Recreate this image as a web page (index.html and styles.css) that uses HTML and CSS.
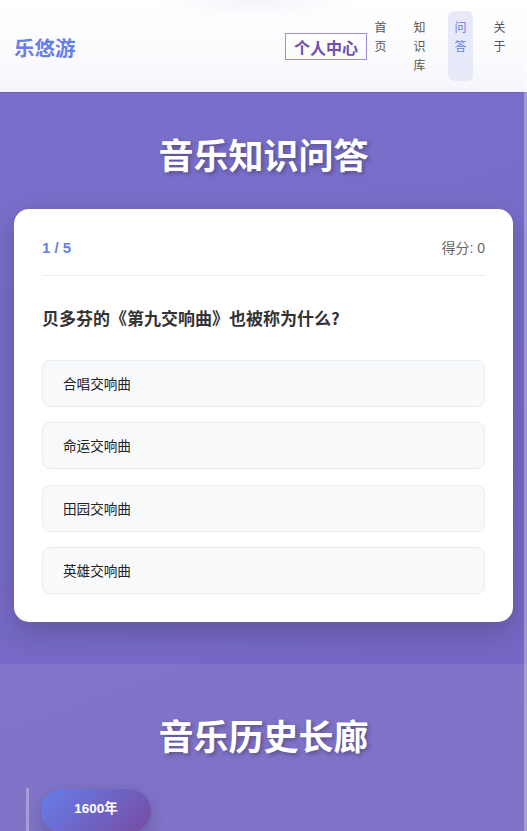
FILE: index.html
```html
<!DOCTYPE html>
<html lang="zh-CN">
<head>
<meta charset="utf-8">
<title>乐悠游 - 音乐知识问答</title>
<link rel="stylesheet" href="styles.css">
</head>
<body>
<header class="site-header">
  <div class="logo">乐悠游</div>
  <div class="header-right">
    <a class="profile-btn" href="#">个人中心</a>
    <ul class="nav">
      <li class="nav-item">首页</li>
      <li class="nav-item">知识库</li>
      <li class="nav-item active">问答</li>
      <li class="nav-item">关于</li>
    </ul>
  </div>
</header>

<main>
  <section class="quiz-section">
    <h2 class="section-title">音乐知识问答</h2>
    <div class="quiz-card">
      <div class="quiz-head">
        <span class="progress">1 / 5</span>
        <span class="score">得分: 0</span>
      </div>
      <h3 class="question">贝多芬的《第九交响曲》也被称为什么?</h3>
      <div class="options">
        <div class="option">合唱交响曲</div>
        <div class="option">命运交响曲</div>
        <div class="option">田园交响曲</div>
        <div class="option">英雄交响曲</div>
      </div>
    </div>
  </section>

  <section class="history-section">
    <h2 class="section-title">音乐历史长廊</h2>
    <div class="timeline">
      <div class="timeline-item">
        <span class="year">1600年</span>
      </div>
    </div>
  </section>
</main>
<div class="edge-strip"></div>
</body>
</html>
```

FILE: styles.css
```css
* { box-sizing: border-box; }

html, body {
  margin: 0;
  padding: 0;
}

body {
  font-family: "Liberation Sans", "Noto Sans CJK SC", sans-serif;
  background: linear-gradient(160deg, #7a70cc 0%, #7466c2 100%);
  color: #333;
  min-height: 831px;
}

.site-header {
  height: 93px;
  display: flex;
  align-items: center;
  justify-content: space-between;
  padding: 0 15px 0 14px;
  background:
    radial-gradient(ellipse 100px 20px at 255px 0px, rgba(238, 236, 248, 0.6), rgba(255, 255, 255, 0) 100%),
    linear-gradient(180deg, #ffffff 0%, #fbfbfe 60%, #f6f5fc 100%);
  border-bottom: 1px solid #6f63bd;
}

.logo {
  font-size: 20.5px;
  font-weight: 700;
  color: #667eea;
  font-family: "Noto Sans CJK SC", sans-serif;
  margin-top: 1px;
}

.header-right {
  display: flex;
  align-items: center;
  height: 70px;
}

.profile-btn {
  display: block;
  font-family: "Noto Sans CJK SC", sans-serif;
  font-size: 16px;
  font-weight: 700;
  line-height: 22px;
  color: #6c4fae;
  text-decoration: none;
  border: 1.5px solid #a08bd6;
  padding: 2px 8px 1px;
  margin-right: 1px;
}

.nav {
  list-style: none;
  margin: 0;
  padding: 0;
  display: flex;
  align-items: stretch;
  height: 70px;
  gap: 14px;
}

.nav-item {
  font-family: "Noto Sans CJK SC", sans-serif;
  font-size: 12px;
  line-height: 19px;
  color: #555;
  padding: 6px 6.5px;
  width: 25px;
  border-radius: 6px;
  word-break: break-all;
}

.nav-item.active {
  background: #e9eaf9;
  color: #667eea;
  margin-left: 2px;
}

.section-title {
  margin: 0;
  text-align: center;
  color: #fff;
  font-family: "Noto Sans CJK SC", sans-serif;
  font-size: 35px;
  font-weight: 700;
  line-height: 42px;
  text-shadow: 2px 2px 4px rgba(0, 0, 0, 0.3);
}

.quiz-section {
  padding: 40px 14px 42px;
}

.quiz-section .section-title {
  margin-bottom: 34px;
}

.quiz-card {
  background: #fff;
  border-radius: 15px;
  padding: 28px 28px 28px;
  box-shadow: 0 10px 30px rgba(0, 0, 0, 0.2);
}

.quiz-head {
  display: flex;
  justify-content: space-between;
  align-items: center;
  line-height: 22px;
  padding-bottom: 16px;
  border-bottom: 1px solid #eeeeee;
}

.progress {
  font-size: 15px;
  font-weight: 700;
  color: #667eea;
}

.score {
  font-size: 14px;
  color: #666;
}

.question {
  margin: 29px 0 29px;
  font-family: "Noto Sans CJK SC", sans-serif;
  font-size: 17px;
  line-height: 26px;
  font-weight: 700;
  color: #333;
}

.options {
  display: flex;
  flex-direction: column;
  gap: 15.3px;
}

.option {
  background: #f8f9fa;
  border: 1px solid #e9ecef;
  border-radius: 8px;
  padding: 14px 20px 14px;
  font-family: "Noto Sans CJK SC", sans-serif;
  font-size: 13.6px;
  line-height: 17px;
  color: #222;
}

.history-section {
  background: rgba(255, 255, 255, 0.08);
  padding: 50px 14px 0 26px;
  min-height: 200px;
}

.history-section .section-title {
  margin-bottom: 32px;
  margin-left: -12px;
}

.timeline {
  border-left: 3px solid rgba(255, 255, 255, 0.3);
  padding-left: 12px;
  padding-top: 1px;
}

.year {
  display: inline-block;
  width: 110px;
  height: 44px;
  line-height: 40px;
  text-align: center;
  border-radius: 22px;
  background: linear-gradient(135deg, #667eea 0%, #764ba2 100%);
  color: #fff;
  font-weight: 700;
  font-size: 13.5px;
  font-family: "Liberation Sans", "Noto Sans CJK SC", sans-serif;
  box-shadow: 0 5px 15px rgba(0, 0, 0, 0.2);
}

.edge-strip {
  position: fixed;
  top: 0;
  right: 0;
  width: 3px;
  height: 100%;
  background: rgba(255, 255, 255, 0.3);
}
```
